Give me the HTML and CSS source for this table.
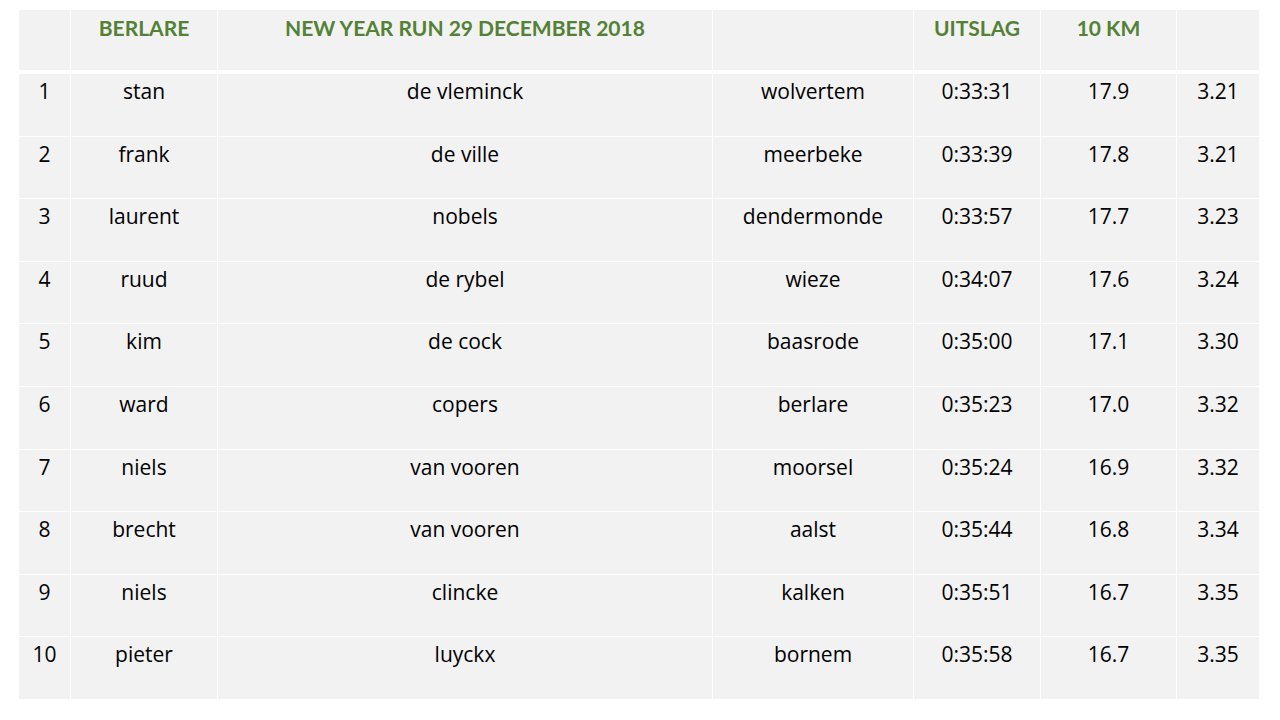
FILE: index.html
```html
<!DOCTYPE html>
<html>
<head>
<meta charset="utf-8">
<link rel="stylesheet" href="styles.css">
</head>
<body>
<div class="sheet">
  <div class="grid">
    <div class="cell head"></div>
    <div class="cell head">BERLARE</div>
    <div class="cell head">NEW YEAR RUN 29 DECEMBER 2018</div>
    <div class="cell head"></div>
    <div class="cell head">UITSLAG</div>
    <div class="cell head">10 KM</div>
    <div class="cell head"></div>

    <div class="cell">1</div><div class="cell">stan</div><div class="cell">de vleminck</div><div class="cell">wolvertem</div><div class="cell">0:33:31</div><div class="cell">17.9</div><div class="cell">3.21</div>
    <div class="cell">2</div><div class="cell">frank</div><div class="cell">de ville</div><div class="cell">meerbeke</div><div class="cell">0:33:39</div><div class="cell">17.8</div><div class="cell">3.21</div>
    <div class="cell">3</div><div class="cell">laurent</div><div class="cell">nobels</div><div class="cell">dendermonde</div><div class="cell">0:33:57</div><div class="cell">17.7</div><div class="cell">3.23</div>
    <div class="cell">4</div><div class="cell">ruud</div><div class="cell">de rybel</div><div class="cell">wieze</div><div class="cell">0:34:07</div><div class="cell">17.6</div><div class="cell">3.24</div>
    <div class="cell">5</div><div class="cell">kim</div><div class="cell">de cock</div><div class="cell">baasrode</div><div class="cell">0:35:00</div><div class="cell">17.1</div><div class="cell">3.30</div>
    <div class="cell">6</div><div class="cell">ward</div><div class="cell">copers</div><div class="cell">berlare</div><div class="cell">0:35:23</div><div class="cell">17.0</div><div class="cell">3.32</div>
    <div class="cell">7</div><div class="cell">niels</div><div class="cell">van vooren</div><div class="cell">moorsel</div><div class="cell">0:35:24</div><div class="cell">16.9</div><div class="cell">3.32</div>
    <div class="cell">8</div><div class="cell">brecht</div><div class="cell">van vooren</div><div class="cell">aalst</div><div class="cell">0:35:44</div><div class="cell">16.8</div><div class="cell">3.34</div>
    <div class="cell">9</div><div class="cell">niels</div><div class="cell">clincke</div><div class="cell">kalken</div><div class="cell">0:35:51</div><div class="cell">16.7</div><div class="cell">3.35</div>
    <div class="cell">10</div><div class="cell">pieter</div><div class="cell">luyckx</div><div class="cell">bornem</div><div class="cell">0:35:58</div><div class="cell">16.7</div><div class="cell">3.35</div>
  </div>
</div>
</body>
</html>
```
FILE: styles.css
```css
html, body {
  margin: 0;
  padding: 0;
  background: #ffffff;
}
.sheet {
  width: 1280px;
  height: 720px;
  padding: 10px 21px 0 19px;
  box-sizing: border-box;
}
.grid {
  display: grid;
  grid-template-columns: 51px 146px 494px 200px 126px 135px 82px;
  grid-template-rows: 63px repeat(10, 61.6px);
  column-gap: 1px;
  row-gap: 1px;
  background: #ffffff;
}
.cell {
  background: #f2f2f2;
  color: #000000;
  font-family: "Open Sans", Lato, sans-serif;
  font-size: 21px;
  line-height: 26px;
  text-align: center;
  padding-top: 4px;
  box-sizing: border-box;
}
.head {
  font-family: Lato, "Open Sans", sans-serif;
  font-size: 21px;
  color: #538135;
  font-weight: bold;
  border-bottom: 3px solid #ffffff;
  padding-top: 5px;
}
```
